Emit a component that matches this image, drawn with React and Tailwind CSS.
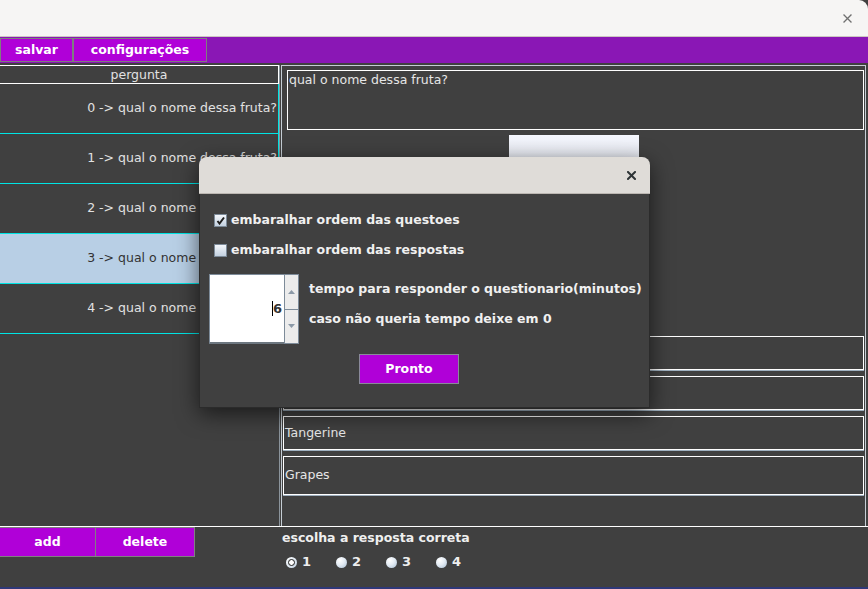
import React from "react";

const perguntas = [
  "0 -> qual o nome dessa fruta?",
  "1 -> qual o nome dessa fruta?",
  "2 -> qual o nome dessa fruta?",
  "3 -> qual o nome dessa fruta?",
  "4 -> qual o nome dessa fruta?",
];

const respostas = ["", "", "Tangerine", "Grapes"];

const CloseIcon = ({ color, width }) => (
  <svg width="9" height="9" viewBox="0 0 9 9">
    <path d="M1 1L8 8M8 1L1 8" stroke={color} strokeWidth={width} strokeLinecap="square" />
  </svg>
);

const Checkbox = ({ checked }) => (
  <div className="w-[13px] h-[13px] border border-[#7c8a98] bg-gradient-to-b from-[#f3f6fa] to-[#c3d1e0] flex items-center justify-center">
    {checked && (
      <svg width="9" height="9" viewBox="0 0 9 9">
        <path d="M1.5 5L3.5 7.5L8 1.5" stroke="#1e1e1e" strokeWidth="2" fill="none" />
      </svg>
    )}
  </div>
);

const Radio = ({ selected, label }) => (
  <div className="w-[50px] flex items-center gap-[5px]">
    {selected ? (
      <div className="w-[11px] h-[11px] rounded-full bg-gradient-to-br from-white to-[#c4d4e4] flex items-center justify-center">
        <div className="w-[7px] h-[7px] rounded-full border-[1.5px] border-[#1c1c1c] bg-white" />
      </div>
    ) : (
      <div className="w-[11px] h-[11px] rounded-full bg-[radial-gradient(circle_at_35%_30%,#ffffff_0%,#e4ecf4_45%,#a9bfd5_100%)]" />
    )}
    <span className="text-[#eeeeee] font-bold text-[13px] leading-[16px]">{label}</span>
  </div>
);

const App = () => {
  return (
    <div className="relative w-[868px] h-[589px] overflow-hidden bg-[#404040] font-['DejaVu_Sans',sans-serif] text-[12.5px]">
      {/* barra de titulo */}
      <div className="h-[37px] bg-[#f6f5f4] border-b border-[#cdc7c2] rounded-tr-[9px] flex items-center justify-end pr-[16px]">
        <CloseIcon color="#707070" width="1.3" />
      </div>

      {/* menu */}
      <div className="h-[26px] bg-[#8a17b5] flex items-start pt-px">
        <button className="w-[73px] h-[24px] border border-[#7e7e7e] bg-[#b000d8] text-white font-bold leading-[22px]">
          salvar
        </button>
        <button className="w-[134px] h-[24px] border border-[#7e7e7e] bg-[#b000d8] text-white font-bold leading-[22px]">
          configurações
        </button>
      </div>

      {/* area principal */}
      <div className="h-[464px] pt-[2px] border-b border-white flex">
        <div className="w-[279px] flex flex-col">
          <div className="h-[19px] border-t border-white border-b border-r border-[#8f9aa5] border-t-white text-center text-[#e2e2e2] leading-[17px]">
            pergunta
          </div>
          {perguntas.map((p, i) => (
            <div
              key={i}
              className={`h-[50px] border-b border-r border-[#00e4e4] flex items-center justify-end pr-px whitespace-nowrap ${
                i === 3 ? "bg-[#b8cfe5] text-[#333333]" : "text-[#e2e2e2]"
              }`}
            >
              {p}
            </div>
          ))}
          <div className="flex-1" />
        </div>

        <div className="w-[2px] border-l border-[#8b949c]" />

        <div className="flex-1 mr-[2px] flex flex-col border-t border-l border-r border-[#c5cdd4] px-px">
          <div className="mt-[4px] ml-[4px] h-[60px] border border-white text-[#e6e6e6] pl-px leading-[15px] pt-px">
            qual o nome dessa fruta?
          </div>
          <div className="mt-[5px] ml-[226px] w-[130px] h-[40px] bg-gradient-to-b from-[#f5f7fe] to-[#d8dbe3]" />
          <div className="mt-[161px] flex flex-col gap-[6px]">
            {respostas.map((r, i) => (
              <div
                key={i}
                className={`${i === 3 ? "h-[39px]" : "h-[34px]"} border border-white shadow-[0_1px_0_#9fb0bf] flex items-center pl-px text-[#e6e6e6]`}
              >
                {r}
              </div>
            ))}
          </div>
        </div>
      </div>

      {/* rodape */}
      <div className="h-[60px] flex">
        <div className="w-[282px] flex items-start">
          <button className="w-[96px] h-[30px] border border-l-0 border-[#808080] bg-[#b000d8] text-white font-bold">
            add
          </button>
          <button className="w-[99px] h-[30px] border border-l-0 border-[#808080] bg-[#b000d8] text-white font-bold">
            delete
          </button>
        </div>
        <div className="flex flex-col">
          <div className="mt-[3px] leading-[16px] font-bold text-[#efefef] whitespace-nowrap">
            escolha a resposta correta
          </div>
          <div className="mt-[8px] pl-[4px] flex">
            <Radio selected label="1" />
            <Radio label="2" />
            <Radio label="3" />
            <Radio label="4" />
          </div>
        </div>
      </div>
      <div className="h-[2px] bg-[#2f3878]" />

      {/* dialogo de configuracoes */}
      <div className="absolute left-[199px] top-[157px] w-[451px] rounded-t-[8px] shadow-[0_6px_22px_rgba(0,0,0,0.6)]">
        <div className="h-[37px] rounded-t-[8px] bg-[#dfdcd8] border-b border-[#bcb7b2] flex items-center justify-end pr-[14px]">
          <CloseIcon color="#2e3436" width="2" />
        </div>
        <div className="h-[214px] bg-[#404040] border border-t-0 border-[#2b2b2b] pl-[9px] pt-[17px] flex flex-col">
          <div className="h-[18px] pl-[5px] flex items-center gap-[4px]">
            <Checkbox checked />
            <span className="font-bold text-[#f0f0f0] whitespace-nowrap">embaralhar ordem das questoes</span>
          </div>
          <div className="mt-[12px] h-[18px] pl-[5px] flex items-center gap-[4px]">
            <Checkbox />
            <span className="font-bold text-[#f0f0f0] whitespace-nowrap">embaralhar ordem das respostas</span>
          </div>
          <div className="mt-[15px] flex">
            <div className="w-[90px] h-[70px] flex">
              <div className="w-[75px] h-full bg-white border-l border-t border-[#7d8b99] border-b-2 border-b-[#6d7780] flex items-center justify-end pr-[2px]">
                <div className="w-px h-[15px] bg-black" />
                <span className="text-[#333333] text-[13px] font-bold">6</span>
              </div>
              <div className="w-[15px] h-full border border-[#7d8b99] bg-[#ececec] flex flex-col">
                <div className="flex-1 border-b border-[#7d8b99] flex items-center justify-center">
                  <svg width="7" height="4" viewBox="0 0 7 4">
                    <path d="M0 4L3.5 0L7 4Z" fill="#8c9aa8" />
                  </svg>
                </div>
                <div className="flex-1 flex items-center justify-center">
                  <svg width="7" height="4" viewBox="0 0 7 4">
                    <path d="M0 0L3.5 4L7 0Z" fill="#8c9aa8" />
                  </svg>
                </div>
              </div>
            </div>
            <div className="ml-[10px] pt-[7px] flex flex-col font-bold text-[#f0f0f0] leading-[16px] whitespace-nowrap">
              <span>tempo para responder o questionario(minutos)</span>
              <span className="mt-[14px]">caso não queria tempo deixe em 0</span>
            </div>
          </div>
          <button className="mt-[10px] ml-[150px] w-[100px] h-[30px] border border-[#8a8a9a] bg-[#b000d8] text-white font-bold">
            Pronto
          </button>
        </div>
      </div>
    </div>
  );
};

export default App;
